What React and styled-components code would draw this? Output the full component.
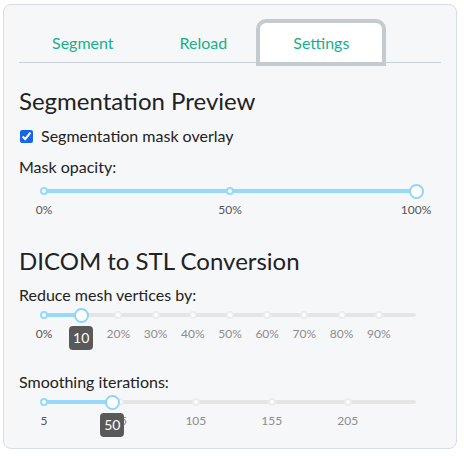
import React from 'react';
import styled, { createGlobalStyle } from 'styled-components';

const GlobalStyle = createGlobalStyle`
  html, body {
    margin: 0;
    padding: 0;
    background: #ffffff;
    font-family: 'Lato', 'Open Sans', sans-serif;
    color: #222222;
  }
`;

const Page = styled.div`
  padding: 4px 3px 0 3px;
`;

const Card = styled.div`
  box-sizing: border-box;
  width: 454px;
  height: 445px;
  border: 1px solid #d8dde3;
  border-radius: 8px;
  background: #f6f7f9;
  padding: 18px 15px 0 15px;
  display: flex;
  flex-direction: column;
`;

const TabRow = styled.div`
  display: flex;
  border-bottom: 1px solid #c9cfd7;
`;

const Tab = styled.div`
  height: 39px;
  padding: 0 33px;
  display: flex;
  align-items: center;
  font-size: 16px;
  color: #17b08a;
  background: ${(p) => (p.$active ? '#ffffff' : 'transparent')};
  outline: ${(p) => (p.$active ? '4px solid #c5cacf' : 'none')};
  border-radius: 6px 6px 0 0;
`;

const Section = styled.section`
  display: flex;
  flex-direction: column;
  gap: ${(p) => p.$gap}px;
  margin-top: ${(p) => p.$top}px;
`;

const Heading = styled.h2`
  margin: 0;
  font-size: 24px;
  line-height: 29px;
  font-weight: 400;
  color: #222222;
`;

const CheckRow = styled.label`
  display: flex;
  align-items: center;
  gap: 8px;
  margin-left: 1px;
  font-size: 16px;
  line-height: 20px;
`;

const Check = styled.input`
  margin: 0;
  width: 13px;
  height: 13px;
  accent-color: #1667e8;
`;

const Field = styled.div`
  display: flex;
  flex-direction: column;
  gap: ${(p) => (p.$loose ? 7 : 3)}px;
  margin-top: ${(p) => (p.$spaced ? 21 : 0)}px;
`;

const FieldLabel = styled.div`
  font-size: 16px;
  line-height: 20px;
`;

const SliderBox = styled.div`
  position: relative;
  height: 33px;
  margin: 0 25px;
`;

const Rail = styled.div`
  position: absolute;
  left: 0;
  right: 0;
  top: 5px;
  height: 4px;
  border-radius: 2px;
  background: #e5e5e5;
`;

const Track = styled.div`
  position: absolute;
  left: 0;
  top: 5px;
  height: 4px;
  border-radius: 2px;
  background: #96daf7;
`;

const Dot = styled.span`
  position: absolute;
  top: 3px;
  width: 8px;
  height: 8px;
  box-sizing: border-box;
  margin-left: -4px;
  border-radius: 50%;
  background: #ffffff;
  border: 2px solid ${(p) => (p.$active ? '#96daf7' : '#ececec')};
`;

const Handle = styled.span`
  position: absolute;
  top: 0;
  width: 15px;
  height: 15px;
  box-sizing: border-box;
  margin-left: -7.5px;
  margin-top: -0.5px;
  border-radius: 50%;
  background: #ffffff;
  border: 2px solid #8fd6f6;
  z-index: 2;
`;

const MarkLabel = styled.span`
  position: absolute;
  top: 19px;
  transform: translateX(-50%);
  font-size: 12px;
  line-height: 14px;
  white-space: nowrap;
  color: ${(p) => (p.$active ? '#555555' : '#8c8c8c')};
`;

const Bubble = styled.span`
  position: absolute;
  top: 18px;
  transform: translateX(-50%);
  width: 24px;
  height: 24px;
  border-radius: 4px;
  background: #595959;
  color: #ffffff;
  font-size: 14px;
  line-height: 24px;
  text-align: center;
  z-index: 3;
`;

const Slider = ({ min, max, value, marks, labels, tip }) => {
  const pos = (v) => ((v - min) / (max - min)) * 100;
  return (
    <SliderBox>
      <Rail />
      <Track style={{ width: `${pos(value)}%` }} />
      {marks.map((m) => (
        <Dot key={m} $active={m <= value} style={{ left: `${pos(m)}%` }} />
      ))}
      <Handle style={{ left: `${pos(value)}%` }} />
      {marks.map((m, i) => (
        <MarkLabel key={m} $active={m <= value} style={{ left: `${pos(m)}%` }}>
          {labels[i]}
        </MarkLabel>
      ))}
      {tip && <Bubble style={{ left: `${pos(value)}%` }}>{value}</Bubble>}
    </SliderBox>
  );
};

const App = () => {
  const reduceMarks = [0, 10, 20, 30, 40, 50, 60, 70, 80, 90];
  const smoothMarks = [5, 55, 105, 155, 205];

  return (
    <>
      <GlobalStyle />
      <Page>
        <Card>
          <TabRow>
            <Tab>Segment</Tab>
            <Tab>Reload</Tab>
            <Tab $active>Settings</Tab>
          </TabRow>

          <Section $top={23} $gap={11}>
            <Heading>Segmentation Preview</Heading>
            <CheckRow>
              <Check type="checkbox" checked readOnly />
              Segmentation mask overlay
            </CheckRow>
            <Field $loose>
              <FieldLabel>Mask opacity:</FieldLabel>
              <Slider
                min={0}
                max={100}
                value={100}
                marks={[0, 50, 100]}
                labels={['0%', '50%', '100%']}
              />
            </Field>
          </Section>

          <Section $top={29} $gap={10}>
            <Heading>DICOM to STL Conversion</Heading>
            <Field>
              <FieldLabel>Reduce mesh vertices by:</FieldLabel>
              <Slider
                min={0}
                max={100}
                value={10}
                marks={reduceMarks}
                labels={reduceMarks.map((m) => `${m}%`)}
                tip
              />
            </Field>
            <Field $spaced>
              <FieldLabel>Smoothing iterations:</FieldLabel>
              <Slider
                min={5}
                max={250}
                value={50}
                marks={smoothMarks}
                labels={smoothMarks.map((m) => `${m}`)}
                tip
              />
            </Field>
          </Section>
        </Card>
      </Page>
    </>
  );
};

export default App;
